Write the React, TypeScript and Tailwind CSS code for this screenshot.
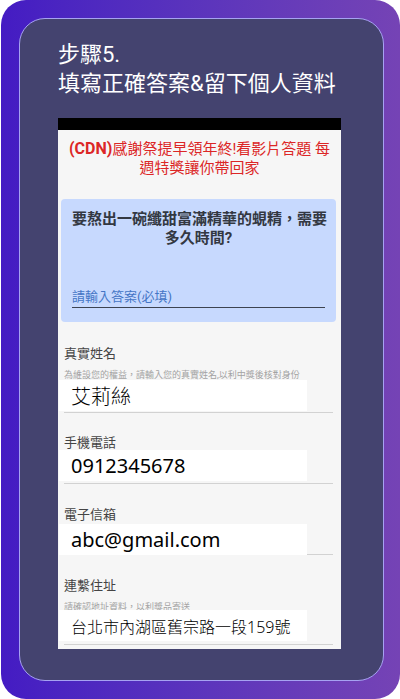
type FieldProps = {
  id: string;
  label: string;
  value: string;
  type?: string;
  hint?: string;
  hintClass?: string;
  labelClass?: string;
  rowClass: string;
  inputClass?: string;
};

function Field({
  id,
  label,
  value,
  type = "text",
  hint,
  hintClass = "",
  labelClass = "",
  rowClass,
  inputClass = "text-[20px] font-light",
}: FieldProps) {
  return (
    <div className={`flex flex-col border-b border-[#d2d2d2] ${rowClass}`}>
      <label htmlFor={id} className={`text-[13px] leading-[14px] text-[#444444] ${labelClass}`}>
        {label}
      </label>
      {hint && (
        <p className={`mt-[7px] h-3 text-[9px] leading-[14px] whitespace-nowrap text-[#a3a3a3] ${hintClass}`}>{hint}</p>
      )}
      <input
        id={id}
        type={type}
        defaultValue={value}
        className={`-ml-[5px] h-[31px] w-[248px] max-w-full bg-white pl-3 text-black outline-none ${inputClass}`}
      />
    </div>
  );
}

export default function App() {
  return (
    <main className="ml-px rounded-[25px] bg-linear-to-r from-[#441bc3] to-[#7543b5] pt-[18px] pr-4 pb-[18px] pl-[18px] font-['Noto_Sans','Noto_Sans_CJK_TC',sans-serif]">
      <section className="rounded-[26px] border border-[#a6a2f2] bg-[#44436f] pt-[21px] pr-[42px] pb-[31px] pl-[38px]">
        <h1 className="font-['Roboto','Noto_Sans_CJK_TC',sans-serif] text-[22px] leading-[29px] font-normal whitespace-nowrap text-white">
          步驟5.
          <br />
          填寫正確答案&amp;留下個人資料
        </h1>

        <form className="mt-5 bg-[#f6f6f6] font-['Roboto','Noto_Sans_CJK_TC',sans-serif]">
          <div className="h-3 bg-black" />
          <h2 className="mt-[10px] text-center text-[15px] leading-[19px] font-normal text-[#dc2626]">
            <span className="text-[16px] leading-none font-bold">(CDN)</span>感謝祭提早領年終!看影片答題 每
            <br />
            週特獎讓你帶回家
          </h2>

          <div className="mt-[21px] mr-[5px] ml-[3px] flex flex-col rounded bg-[#c7d9fe] pt-[11px] pr-[11px] pb-[14px] pl-[11px]">
            <label htmlFor="answer" className="text-center text-[15px] leading-[19px] font-bold whitespace-nowrap text-[#333842]">
              要熬出一碗纖甜富滿精華的蜆精，需要
              <br />
              多久時間?
            </label>
            <input
              id="answer"
              required
              placeholder="請輸入答案(必填)"
              className="mt-[39px] h-[21px] border-b border-[#3d4350] bg-transparent pb-[2px] text-[13px] outline-none placeholder:text-[#4475c5]"
            />
          </div>

          <div className="mt-[25px] flex flex-col pr-2 pb-1 pl-[6px]">
            <Field
              id="name"
              label="真實姓名"
              value="艾莉絲"
              hint="為維設您的權益，請輸入您的真實姓名,以利中獎後核對身份"
              rowClass="pb-px"
            />
            <Field
              id="phone"
              label="手機電話"
              value="0912345678"
              type="tel"
              rowClass="mt-[23px] pb-[2px]"
              inputClass="font-['Noto_Sans',sans-serif] text-[20px]"
            />
            <Field
              id="email"
              label="電子信箱"
              value="abc@gmail.com"
              type="email"
              labelClass="pb-[2px]"
              rowClass="mt-6"
              inputClass="-mb-px font-['Noto_Sans',sans-serif] text-[20px]"
            />
            <Field
              id="address"
              label="連繫住址"
              value="台北市內湖區舊宗路一段159號"
              hint="請確認地址資料，以利獎品寄送"
              hintClass="-mb-[2px]"
              rowClass="mt-6 pb-[3px]"
              inputClass="font-['Noto_Sans','Noto_Sans_CJK_TC',sans-serif] text-[16px] font-light"
            />
          </div>
        </form>
      </section>
    </main>
  );
}
